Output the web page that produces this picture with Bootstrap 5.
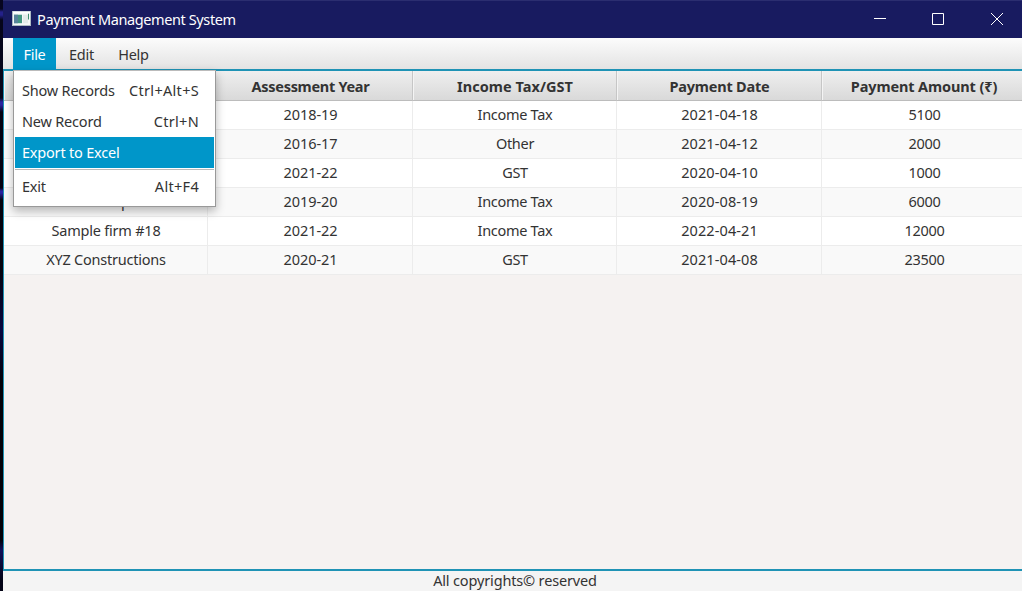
<!DOCTYPE html>
<html lang="en">
<head>
<meta charset="utf-8">
<title>Payment Management System</title>
<link href="https://cdn.jsdelivr.net/npm/bootstrap@5.3.0/dist/css/bootstrap.min.css" rel="stylesheet">
<style>
body{width:1022px;height:591px;overflow:hidden;font-family:"Noto Sans","Open Sans",sans-serif;font-size:14.5px;line-height:20px;letter-spacing:-.3px;color:#333;background:#03030f}
.desktop-edge{width:3px;background:linear-gradient(#070620 0 9px,#24218a 12px 15px,#05051a 20px 98px,#2923a0 102px 105px,#030312 112px 188px,#2721a0 191px 193px,#04040f 200px 270px,#070740 330px,#02020a 380px 540px,#10105a 550px,#030315 580px)}
.titlebar{height:38px;background:#181b60;border-top:1px solid #2b2e70;color:#fff;padding-left:9px}
.title-text{letter-spacing:-.39px;margin-left:6px;padding-bottom:2px}
.titlebar svg{display:block}
.app-icon{margin-bottom:3px}
.menubar{height:31px;background:linear-gradient(#fcfcfc,#e3e3e3);padding-left:10px}
.menubar .nav-link{height:32px;padding:6px 0 0;color:#333;text-align:center}
.menubar .nav-link.active{background:#0096c9;color:#fff;padding-left:0}
.menubar .dropdown-menu{left:0;top:32px;width:203px;min-width:0;height:137px;padding:4px 1px 0;border:1px solid #999;border-top-color:#bbb;border-radius:0;background:#fff;font-size:14.5px;box-shadow:0 4px 9px rgba(0,0,0,.28);z-index:5}
.menubar .dropdown-item{height:31px;padding:5px 15px 0 7px;color:#333;letter-spacing:-.2px}
.menubar .dropdown-item.active{background:#0096c9;color:#fff}
.menubar .dropdown-divider{margin:1px 0;border-top:1px solid #b9b9b9;opacity:1}
.shortcut{letter-spacing:.3px}
.records{height:502px;border:solid #1f93b5;border-width:2px 0 2px 1px;background:#f5f2f1;overflow:hidden}
.records-grid{width:1023px;display:grid;grid-template-columns:204px 205px 204px 205px 205px}
.records-grid>div{height:29px;padding-top:3px;padding-left:1px;text-align:center;border-right:1px solid #ececec;border-bottom:1px solid #ececec;background:#fff}
.records-grid>.alt{background:#f9f9f9}
.records-grid>.head{height:30px;padding-top:5px;font-weight:700;background:linear-gradient(#efefef,#d9d9d9);border-right-color:#c6c6c6;border-bottom-color:#bcbcbc;box-shadow:inset 1px 0 #f4f4f4}
.records-grid>.head.tax{letter-spacing:.05px}
.records-grid>.head.amount{letter-spacing:-.12px;padding-left:0}
.records-grid>.head.paid{letter-spacing:-.2px}
.records-grid>div.date{letter-spacing:.1px}
.records-grid>div.year{letter-spacing:-.05px}
.records-grid>div.firm{letter-spacing:-.22px}
.statusbar{height:20px;margin-top:-1px;padding-left:5px;letter-spacing:-.15px}
main{background:#f4f4f4}
</style>
<script src="https://cdn.jsdelivr.net/npm/bootstrap@5.3.0/dist/js/bootstrap.bundle.min.js"></script>
</head>
<body class="d-flex">
<div class="desktop-edge flex-shrink-0"></div>
<main class="d-flex flex-column flex-grow-1 overflow-hidden">
<header class="titlebar d-flex align-items-center">
<svg class="app-icon" width="19" height="15" viewBox="0 0 19 16" preserveAspectRatio="none"><rect x=".5" y=".5" width="18" height="15" fill="#f5f7f8" stroke="#aebbc4"/><path d="M1 1.5h17" stroke="#fff" stroke-width="2"/><path d="M2 4h8v9H2z" fill="#459783"/><path d="M2 4h4v9H2z" fill="#58849b"/><path d="M11 4h5v9h-5z" fill="#e3eae9"/><path d="M16 3h1v6h-1z" fill="#428f72"/></svg>
<span class="title-text">Payment Management System</span>
<div class="d-flex ms-auto">
<svg width="151" height="37" viewBox="0 0 151 37" fill="none" stroke="#fff"><path d="M3 17.5h12M61.5 12.5h11v11h-11zM120 12l12 12M132 12l-12 12"/></svg>
</div>
</header>
<nav class="menubar d-flex flex-shrink-0">
<div class="dropdown position-relative"><a class="nav-link active" style="width:43px">File</a>
<div class="dropdown-menu show">
<a class="dropdown-item d-flex justify-content-between"><span>Show Records</span><span class="shortcut">Ctrl+Alt+S</span></a>
<a class="dropdown-item d-flex justify-content-between"><span>New Record</span><span class="shortcut">Ctrl+N</span></a>
<a class="dropdown-item active">Export to Excel</a>
<hr class="dropdown-divider">
<a class="dropdown-item d-flex justify-content-between"><span>Exit</span><span class="shortcut">Alt+F4</span></a>
</div></div>
<a class="nav-link" style="width:51px">Edit</a><a class="nav-link" style="width:53px">Help</a>
</nav>
<section class="records flex-shrink-0">
<div class="records-grid">
<div class="head"></div><div class="head">Assessment Year</div><div class="head tax">Income Tax/GST</div><div class="head paid">Payment Date</div><div class="head amount">Payment Amount (₹)</div>
<div></div><div class="year">2018-19</div><div>Income Tax</div><div class="date">2021-04-18</div><div>5100</div>
<div class="alt"></div><div class="alt year">2016-17</div><div class="alt">Other</div><div class="alt date">2021-04-12</div><div class="alt">2000</div>
<div></div><div class="year">2021-22</div><div>GST</div><div class="date">2020-04-10</div><div>1000</div>
<div class="alt">XYZ Enterprise</div><div class="alt year">2019-20</div><div class="alt">Income Tax</div><div class="alt date">2020-08-19</div><div class="alt">6000</div>
<div class="firm">Sample firm #18</div><div class="year">2021-22</div><div>Income Tax</div><div class="date">2022-04-21</div><div>12000</div>
<div class="alt firm">XYZ Constructions</div><div class="alt year">2020-21</div><div class="alt">GST</div><div class="alt date">2021-04-08</div><div class="alt">23500</div>
</div>
</section>
<footer class="statusbar text-center pe-0">All copyrights© reserved</footer>
</main>
</body>
</html>
